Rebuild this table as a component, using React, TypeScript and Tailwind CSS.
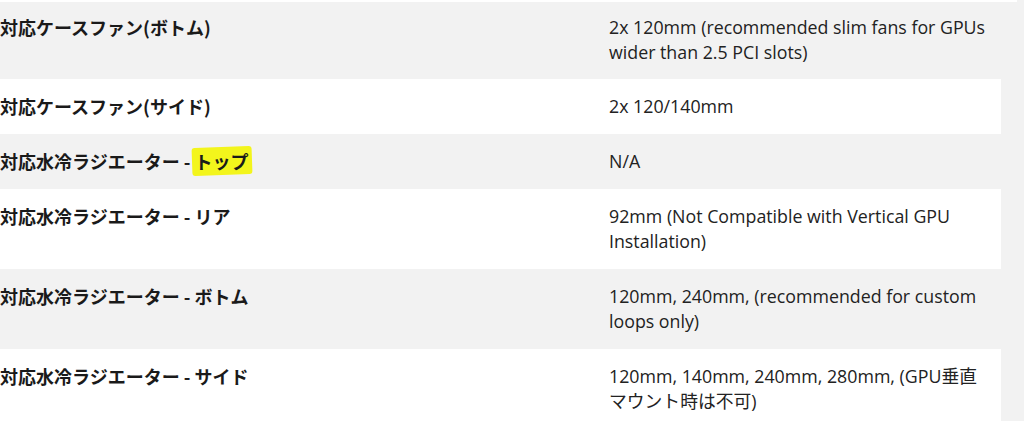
import React from "react";

const rows: { label: React.ReactNode; value: React.ReactNode[]; pad: string; white: boolean }[] = [
  {
    label: "対応ケースファン(ボトム)",
    value: ["2x 120mm (recommended slim fans for GPUs", "wider than 2.5 PCI slots)"],
    pad: "pt-[13px] pb-[14px]",
    white: false,
  },
  { label: "対応ケースファン(サイド)", value: ["2x 120/140mm"], pad: "py-[15px]", white: true },
  {
    label: (
      <>
        対応水冷ラジエーター -{" "}
        <span className="relative inline-block">
          <span className="absolute left-[-2px] right-[-4px] top-[-2px] bottom-[-1px] -rotate-2 rounded-[3px] bg-[#f3f51c]" />
          <span className="relative">トップ</span>
        </span>
      </>
    ),
    value: ["N/A"],
    pad: "py-[15px]",
    white: false,
  },
  {
    label: "対応水冷ラジエーター - リア",
    value: ["92mm (Not Compatible with Vertical GPU", "Installation)"],
    pad: "py-[15px]",
    white: true,
  },
  {
    label: "対応水冷ラジエーター - ボトム",
    value: ["120mm, 240mm, (recommended for custom", "loops only)"],
    pad: "py-[15px]",
    white: false,
  },
  {
    label: "対応水冷ラジエーター - サイド",
    value: ["120mm, 140mm, 240mm, 280mm, (GPU垂直", "マウント時は不可)"],
    pad: "py-[15px]",
    white: true,
  },
];

export default function App() {
  return (
    <div className="h-[421px] w-[1024px] overflow-hidden bg-[#f2f2f2]">
      <div className="h-[2px] w-[1017px] bg-white" />
      <div className="w-[1001px]">
        {rows.map((row, i) => (
          <div key={i} className={`flex ${row.pad} ${row.white ? "bg-white" : ""}`}>
            <div
              className="w-[609px] shrink-0 text-[18px] leading-[25px] font-bold text-[#1a1a1a]"
              style={{ fontFamily: '"Noto Sans CJK JP", "Noto Sans", sans-serif' }}
            >
              {row.label}
            </div>
            <div
              className="flex-1 whitespace-nowrap text-[17.8px] leading-[25px] text-[#222222]"
              style={{ fontFamily: '"Open Sans", "Noto Sans CJK JP", sans-serif' }}
            >
              {row.value.map((line, j) => (
                <div key={j}>{line}</div>
              ))}
            </div>
          </div>
        ))}
      </div>
    </div>
  );
}
